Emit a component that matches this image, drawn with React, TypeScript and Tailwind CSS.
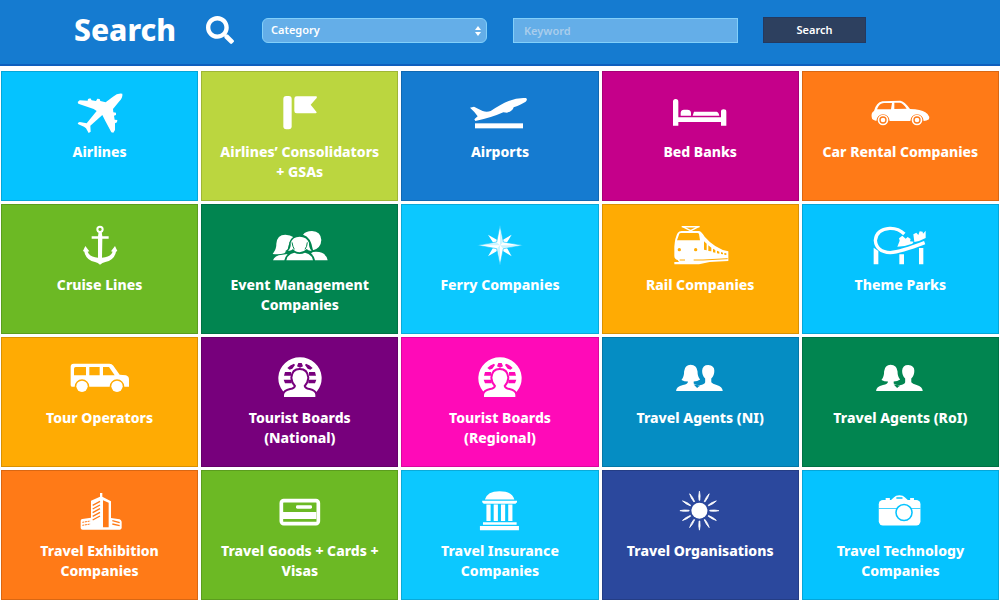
import { ReactNode } from 'react';
import { FaSearch } from 'react-icons/fa';

interface Category {
  label: string;
  // the text colour repeats the background, so cut-outs in the icons can use currentColor
  color: string;
  icon: ReactNode;
}

const SUN_RAYS = [0, 30, 60, 90, 120, 150, 180, 210, 240, 270, 300, 330];

function Icon({ box, children }: { box: string; children: ReactNode }) {
  return (
    <svg viewBox={box} className="h-11 w-[70px] shrink-0" fill="white" aria-hidden="true">
      {children}
    </svg>
  );
}

const plane = (
  <Icon box="194 63 210 132">
    <path d="M366 71Q352 68 338 80L316 97L300 93L298 87L291 86L287 93L274 91L270 85L263 87L262 92L238 91L232 96L234 101L280 117L289 123L259 160L238 156L232 159L234 163L251 170L257 175L265 189L271 185L270 167L306 135L315 153L333 187L339 188L344 180L344 160L350 157L351 150L343 149L341 137L347 135L347 128L339 127L338 117L357 94Q368 82 366 71Z" />
  </Icon>
);

const flag = (
  <Icon box="794 63 210 132">
    <rect x="849" y="78" width="25" height="100" rx="9" />
    <path d="M882 86q0-7 7-7h58q5 1 2 5l-18 20l17 21q3 4-2 5h-57q-7 0-7-7z" />
  </Icon>
);

const departure = (
  <Icon box="405 63 210 132">
    <path d="M420 113L432 110Q448 118 458 123Q470 127 482 123Q512 103 536 93Q562 82 588 84Q594 88 587 95Q575 103 551 112Q548 124 531 128L520 127Q485 143 436 153L433 148L443 139Q432 123 420 113Z" />
    <rect x="435" y="160" width="144" height="15" />
  </Icon>
);

const bed = (
  <Icon box="16 63 210 132">
    <path d="M40 95q0-8 8-8t8 8v47h128v-17q0-7 8-7t8 7v42h-16v-11H56v11H40z" />
    <path d="M63 137v-9q1-9 10-9h10q10 0 11 9v9zM99 137l4-12h68q6 1 8 12z" />
  </Icon>
);

const car = (
  <Icon box="616 63 210 132">
    <path d="M636 141Q634 128 643 123Q650 97 668 94L722 92Q734 93 751 117Q784 118 797 127Q806 132 809 141L808 148Q801 153 792 153A20 20 0 0 0 752 153L690 153A20 20 0 0 0 650 153L642 150Q636 148 636 141Z" />
    <path d="M652 118Q659 99 673 99H697L694 118ZM704 98H721Q730 99 741 116L704 117Z" fill="currentColor" />
    <circle cx="670" cy="150" r="13.5" fill="none" stroke="white" strokeWidth="5" />
    <circle cx="670" cy="150" r="7" />
    <circle cx="772" cy="150" r="13.5" fill="none" stroke="white" strokeWidth="5" />
    <circle cx="772" cy="150" r="7" />
  </Icon>
);

const anchor = (
  <Icon box="194 72 210 132">
    <circle cx="299" cy="88" r="8" fill="none" stroke="white" strokeWidth="6" />
    <path d="M295 95H304L306 109H325V116H306L305 173Q331 172 337 155L332 154L344 138L351 153L347 155Q342 181 315 186Q306 188 299 194Q293 188 284 186Q257 181 252 155L248 153L255 138L267 154L262 155Q268 172 293 173V116H274V109H293Z" />
  </Icon>
);

const crowd = (
  <Icon box="794 72 210 132">
    <path d="M817 162Q829 146 828 131Q830 104 855 104Q870 104 880 112Q866 122 862 150L852 160Q838 164 817 162Z" />
    <path d="M818 181Q822 166 846 164L862 162Q856 168 852 181Z" />
    <path d="M908 104Q916 93 935 93Q962 95 963 120Q962 144 938 151Q932 110 908 104Z" />
    <path d="M938 156Q976 152 982 181H944Q943 170 932 160Z" />
    <path
      d="M863 152Q873 144 871 128Q877 110 898 110Q919 110 926 128Q925 144 934 152Q925 154 919 147Q909 157 898 157Q886 157 878 147Q872 154 863 152Z"
      stroke="currentColor"
      strokeWidth="8"
      paintOrder="stroke"
    />
    <path
      d="M858 181Q862 162 882 158Q898 166 914 158Q934 162 938 181Z"
      stroke="currentColor"
      strokeWidth="6"
      paintOrder="stroke"
    />
    <path d="M875 127Q877 140 882 148M921 127Q920 140 914 148" fill="none" stroke="currentColor" strokeWidth="3" />
  </Icon>
);

const compass = (
  <Icon box="195 72 210 132">
    <path d="M264 104L296 122L300 130L304 122L335 104L316 135L335 169L304 150L300 142L296 150L264 169L284 135Z" />
    <path
      d="M300 76L310 126L369 136L310 146L300 196L290 146L232 136L290 126Z"
      stroke="currentColor"
      strokeWidth="2"
    />
    <path
      d="M300 86V136L308 128ZM358 136H300L308 144ZM300 186V136L292 144ZM242 136H300L292 128Z"
      fill="currentColor"
      opacity="0.2"
    />
  </Icon>
);

const train = (
  <Icon box="16 72 210 132">
    <path d="M69 80H117L93 92Z" fill="none" stroke="white" strokeWidth="4" />
    <path d="M66 78h54v4H66z" />
    <path d="M44 140Q46 112 54 99Q58 93 66 93H118Q126 95 135 110Q166 146 206 154V183L150 186L118 193H44V186H58L54 180Q44 177 44 168Z" />
    <path
      d="M52 121L59 101Q60 99 64 99H113Q117 99 118 102L121 121ZM133 124L141 131V151L133 149ZM146 136L155 143V154L146 153ZM160 146L167 150V158L160 157ZM172 152L179 155V161L172 160ZM184 156L190 158V163L184 162ZM194 159L200 160V165L194 164Z"
      fill="currentColor"
    />
    <circle cx="59" cy="149" r="5" fill="currentColor" />
    <circle cx="108" cy="149" r="5" fill="currentColor" />
    <path d="M60 180H76M102 180H130L204 176" fill="none" stroke="currentColor" strokeWidth="3" />
  </Icon>
);

const coaster = (
  <Icon box="616 72 210 132">
    <path
      d="M734 102Q716 84 690 85Q650 88 647 121Q650 155 692 158Q722 156 795 128"
      fill="none"
      stroke="white"
      strokeWidth="10"
    />
    <path d="M642 143L656 153V193H642ZM719 163H733V193H719ZM778 144H791V193H778Z" />
    <path d="M713 140L720 122L718 115L728 107L738 116L744 111L753 117L751 124L762 125L758 131Q738 139 713 140Z" />
    <path d="M764 126L761 103L770 98L776 105L780 94L789 95L790 101L798 92V114Q780 124 764 126Z" />
  </Icon>
);

const van = (
  <Icon box="194 66 210 132">
    <path d="M211 95Q211 86 220 86H327Q335 86 339 92L358 119L377 121Q386 124 386 134V155H372A22 22 0 0 0 328 155H267A22 22 0 0 0 223 155H215Q211 155 211 150Z" />
    <path d="M221 121V101q0-5 5-5h31v25zM267 96h31v25h-31zM308 96H326L343 121H308Z" fill="currentColor" />
    <circle cx="245" cy="154" r="17" />
    <circle cx="350" cy="154" r="17" />
  </Icon>
);

const globe = (
  <Icon box="794 66 210 132">
    <path d="M849 170A65 63 0 1 1 949 170Z" />
    <path
      d="M861 99Q869 90 881 86L884 90L876 101L868 104ZM937 99Q929 90 917 86L914 90L922 101L930 104ZM890 94L894 84H904L908 94L899 98ZM854 111H872V122H851ZM944 111H926V122H947ZM850 134H874V145H854ZM948 134H924V145H944Z"
      fill="currentColor"
    />
    <path
      d="M851 186V179Q853 169 870 165Q886 162 887 152Q877 142 876 128Q878 105 898 105Q919 105 921 128Q920 142 910 152Q911 162 927 165Q944 169 945 179V186Z"
      stroke="currentColor"
      strokeWidth="12"
      paintOrder="stroke"
    />
  </Icon>
);

const couple = (
  <Icon box="693 57 183 115">
    <path d="M736 117Q743 109 743 94Q745 77 760 77Q776 77 778 94Q778 108 785 116Q778 121 768 121V126Q772 130 784 131Q797 128 798 123V113Q790 106 790 93Q791 78 806 78Q822 79 822 93Q822 106 814 113V123Q817 128 828 130Q843 134 844 146H722Q722 134 740 130Q753 128 753 121Q743 121 736 117Z" />
    <path d="M768 129Q778 130 785 132Q780 134 777 138Z" fill="currentColor" />
  </Icon>
);

const building = (
  <Icon box="194 66 210 132">
    <path d="M241 158Q241 153 246 153L272 149V98L299 86V75H306V86L332 100V150L358 154Q363 156 364 161V180Q363 185 358 185H247Q241 185 241 180Z" />
    <path d="M308 97L325 104V178H308Z" fill="currentColor" />
    <path
      d="M277 112L299 100M277 123L299 111M277 134L299 122M277 145L299 133M277 156L299 144"
      stroke="currentColor"
      strokeWidth="4"
    />
    <path d="M246 163L270 159M246 172L270 168" stroke="currentColor" strokeWidth="3" strokeDasharray="6 2" />
    <path d="M336 158L358 164M336 168L358 173" stroke="currentColor" strokeWidth="4" />
  </Icon>
);

const card = (
  <Icon box="794 66 210 132">
    <rect x="843" y="98" width="111" height="69" rx="7" fill="none" stroke="white" strokeWidth="11" />
    <path d="M848 132h100v21h-100z" />
    <rect x="887" y="112" width="48" height="10" rx="4" />
  </Icon>
);

const bank = (
  <Icon box="170 57 183 115">
    <path d="M222 82Q228 60 260 60Q293 60 299 82ZM215 85h91v4l-4 4h-83l-4-4zM217 141h88v7h-88zM209 151h102v11H209z" />
    <path d="M226 95h11v43h-11zM245 95h11v43h-11zM264 95h11v43h-11zM283 95h11v43h-11z" />
  </Icon>
);

const sun = (
  <Icon box="693 57 183 115">
    <circle cx="783" cy="111" r="21" />
    {SUN_RAYS.map(angle => (
      <path
        key={angle}
        d="M783 60Q786 71 784 84H782Q780 71 783 60Z"
        stroke="white"
        strokeWidth="2"
        transform={`rotate(${angle} 783 111)`}
      />
    ))}
  </Icon>
);

const camera = (
  <Icon box="1216 57 183 115">
    <rect x="1252" y="83" width="109" height="67" rx="11" />
    <path d="M1284 83L1292 76Q1296 71 1306 71Q1316 71 1320 76L1328 83ZM1270 78h11v5h-11zM1334 78h10v5h-10z" />
    <path d="M1298 76h16v4h-16zM1252 104h109v2h-109z" fill="currentColor" />
    <circle cx="1318" cy="116" r="21" stroke="currentColor" strokeWidth="4" />
  </Icon>
);

const categories: Category[] = [
  { label: 'Airlines', color: 'bg-[#05c3ff] text-[#05c3ff]', icon: plane },
  { label: 'Airlines’ Consolidators + GSAs', color: 'bg-[#bbd63f] text-[#bbd63f]', icon: flag },
  { label: 'Airports', color: 'bg-[#157bd0] text-[#157bd0]', icon: departure },
  { label: 'Bed Banks', color: 'bg-[#c5008a] text-[#c5008a]', icon: bed },
  { label: 'Car Rental Companies', color: 'bg-[#ff7a17] text-[#ff7a17]', icon: car },
  { label: 'Cruise Lines', color: 'bg-[#6cb924] text-[#6cb924]', icon: anchor },
  { label: 'Event Management Companies', color: 'bg-[#018550] text-[#018550]', icon: crowd },
  { label: 'Ferry Companies', color: 'bg-[#0cc8ff] text-[#0cc8ff]', icon: compass },
  { label: 'Rail Companies', color: 'bg-[#ffab03] text-[#ffab03]', icon: train },
  { label: 'Theme Parks', color: 'bg-[#05c3ff] text-[#05c3ff]', icon: coaster },
  { label: 'Tour Operators', color: 'bg-[#ffab03] text-[#ffab03]', icon: van },
  { label: 'Tourist Boards (National)', color: 'bg-[#77007c] text-[#77007c]', icon: globe },
  { label: 'Tourist Boards (Regional)', color: 'bg-[#ff0ab8] text-[#ff0ab8]', icon: globe },
  { label: 'Travel Agents (NI)', color: 'bg-[#058dc3] text-[#058dc3]', icon: couple },
  { label: 'Travel Agents (RoI)', color: 'bg-[#018550] text-[#018550]', icon: couple },
  { label: 'Travel Exhibition Companies', color: 'bg-[#ff7a17] text-[#ff7a17]', icon: building },
  { label: 'Travel Goods + Cards + Visas', color: 'bg-[#6cb924] text-[#6cb924]', icon: card },
  { label: 'Travel Insurance Companies', color: 'bg-[#0cc8ff] text-[#0cc8ff]', icon: bank },
  { label: 'Travel Organisations', color: 'bg-[#2b489d] text-[#2b489d]', icon: sun },
  { label: 'Travel Technology Companies', color: 'bg-[#05c3ff] text-[#05c3ff]', icon: camera },
];

function SearchBar() {
  return (
    <header className="border-b-2 border-[#0f5fbd] bg-[#157bd0] pt-4 pb-5 pl-[74px]">
      <form className="flex items-center" onSubmit={e => e.preventDefault()}>
        <h1 className="w-[132px] text-[30px] leading-6 font-extrabold text-white">Search</h1>
        <FaSearch className="mr-7 size-7 text-white" aria-hidden="true" />

        <div className="relative mr-[26px] w-[225px]">
          <select
            aria-label="Category"
            className="block h-[25px] w-full appearance-none rounded-md border border-[#82d0fa] bg-[#64aee8] px-2 text-[11px] leading-4 font-semibold text-white"
          >
            <option>Category</option>
            {categories.map(({ label }) => (
              <option key={label}>{label}</option>
            ))}
          </select>
          <svg viewBox="0 0 6 10" className="pointer-events-none absolute top-2 right-1.5 h-2.5 w-1.5" fill="white" aria-hidden="true">
            <path d="M3 0L6 4H0ZM3 10L0 6H6Z" />
          </svg>
        </div>

        <input
          type="text"
          aria-label="Keyword"
          placeholder="Keyword"
          className="mr-[25px] block h-[25px] w-[225px] border border-[#82d0fa] bg-[#64aee8] px-[10px] text-[11px] font-semibold text-white placeholder:text-[#a9cdec]"
        />

        <button type="submit" className="h-[26px] w-[103px] border border-[#24395f] bg-[#2d405f] text-[11px] font-semibold text-white">
          Search
        </button>
      </form>
    </header>
  );
}

export default function App() {
  return (
    <div className="bg-white font-['Noto_Sans',sans-serif]">
      <SearchBar />
      <main className="grid grid-cols-5 gap-[3px] px-px pt-[5px]">
        {categories.map(({ label, color, icon }) => (
          <a
            key={label}
            href="#"
            className={`flex h-[130px] flex-col items-center px-4 pt-5 inset-ring inset-ring-black/15 ${color}`}
          >
            {icon}
            <span className="mt-[7px] text-center text-sm leading-5 font-extrabold text-white">{label}</span>
          </a>
        ))}
      </main>
    </div>
  );
}
